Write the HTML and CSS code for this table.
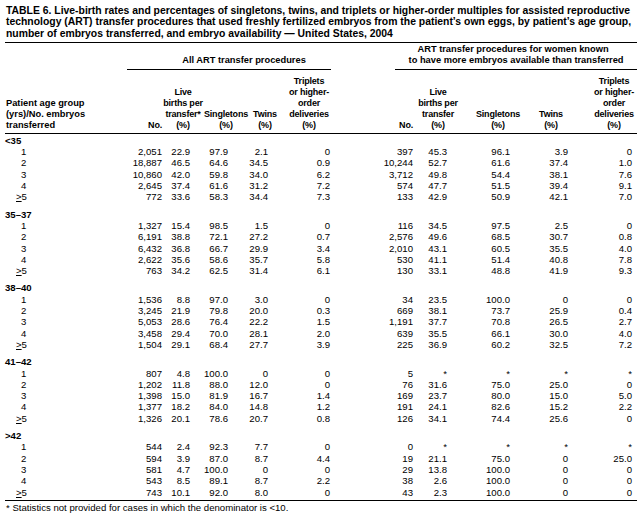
FILE: index.html
```html
<!DOCTYPE html>
<html lang="en">
<head>
<meta charset="utf-8">
<title>Table 6</title>
<link rel="stylesheet" href="styles.css">
</head>
<body>
<div class="page">
  <h1 class="title">TABLE 6. Live-birth rates and percentages of singletons, twins, and triplets or higher-order multiples for assisted reproductive technology (ART) transfer procedures that used freshly fertilized embryos from the patient’s own eggs, by patient’s age group, number of embryos transferred, and embryo availability — United States, 2004</h1>
  <table class="tbl">
    <colgroup>
      <col class="c-lab"><col class="c-nol"><col class="c-livel"><col class="c-singl"><col class="c-twl"><col class="c-trl"><col class="c-nor"><col class="c-liver"><col class="c-singr"><col class="c-twr"><col class="c-trr">
    </colgroup>
    <thead>
      <tr class="hrow1">
        <th colspan="6"></th>
        <th colspan="5" class="grp"><div class="grp-r">ART transfer procedures for women known</div></th>
      </tr>
      <tr class="hrow2">
        <th></th>
        <th colspan="5" class="grp"><div class="ul ul-l">All ART transfer procedures</div></th>
        <th colspan="5" class="grp"><div class="ul ul-r">to have more embryos available than transferred</div></th>
      </tr>
      <tr class="hrow3">
        <th class="lab">Patient age group<br>(yrs)/No. embryos<br>transferred</th>
        <th class="h nol">No.</th>
        <th class="h livel">Live<br>births per<br>transfer*<br>(%)</th>
        <th class="h singl">Singletons<br>(%)</th>
        <th class="h twl">Twins<br>(%)</th>
        <th class="h trl">Triplets<br>or higher-<br>order<br>deliveries<br>(%)</th>
        <th class="h nor">No.</th>
        <th class="h liver">Live<br>births per<br>transfer<br>(%)</th>
        <th class="h singr">Singletons<br>(%)</th>
        <th class="h twr">Twins<br>(%)</th>
        <th class="h trr">Triplets<br>or higher-<br>order<br>deliveries<br>(%)</th>
      </tr>
    </thead>
    <tbody>
      <tr class="grp-head first"><td colspan="11">&lt;35</td></tr>
      <tr><td class="n">1</td><td class="v nol">2,051</td><td class="v livel">22.9</td><td class="v singl">97.9</td><td class="v twl">2.1</td><td class="v trl">0</td><td class="v nor">397</td><td class="v liver">45.3</td><td class="v singr">96.1</td><td class="v twr">3.9</td><td class="v trr">0</td></tr>
      <tr><td class="n">2</td><td class="v nol">18,887</td><td class="v livel">46.5</td><td class="v singl">64.6</td><td class="v twl">34.5</td><td class="v trl">0.9</td><td class="v nor">10,244</td><td class="v liver">52.7</td><td class="v singr">61.6</td><td class="v twr">37.4</td><td class="v trr">1.0</td></tr>
      <tr><td class="n">3</td><td class="v nol">10,860</td><td class="v livel">42.0</td><td class="v singl">59.8</td><td class="v twl">34.0</td><td class="v trl">6.2</td><td class="v nor">3,712</td><td class="v liver">49.8</td><td class="v singr">54.4</td><td class="v twr">38.1</td><td class="v trr">7.6</td></tr>
      <tr><td class="n">4</td><td class="v nol">2,645</td><td class="v livel">37.4</td><td class="v singl">61.6</td><td class="v twl">31.2</td><td class="v trl">7.2</td><td class="v nor">574</td><td class="v liver">47.7</td><td class="v singr">51.5</td><td class="v twr">39.4</td><td class="v trr">9.1</td></tr>
      <tr><td class="n"><u>&gt;</u>5</td><td class="v nol">772</td><td class="v livel">33.6</td><td class="v singl">58.3</td><td class="v twl">34.4</td><td class="v trl">7.3</td><td class="v nor">133</td><td class="v liver">42.9</td><td class="v singr">50.9</td><td class="v twr">42.1</td><td class="v trr">7.0</td></tr>

      <tr class="grp-head"><td colspan="11">35–37</td></tr>
      <tr><td class="n">1</td><td class="v nol">1,327</td><td class="v livel">15.4</td><td class="v singl">98.5</td><td class="v twl">1.5</td><td class="v trl">0</td><td class="v nor">116</td><td class="v liver">34.5</td><td class="v singr">97.5</td><td class="v twr">2.5</td><td class="v trr">0</td></tr>
      <tr><td class="n">2</td><td class="v nol">6,191</td><td class="v livel">38.8</td><td class="v singl">72.1</td><td class="v twl">27.2</td><td class="v trl">0.7</td><td class="v nor">2,576</td><td class="v liver">49.6</td><td class="v singr">68.5</td><td class="v twr">30.7</td><td class="v trr">0.8</td></tr>
      <tr><td class="n">3</td><td class="v nol">6,432</td><td class="v livel">36.8</td><td class="v singl">66.7</td><td class="v twl">29.9</td><td class="v trl">3.4</td><td class="v nor">2,010</td><td class="v liver">43.1</td><td class="v singr">60.5</td><td class="v twr">35.5</td><td class="v trr">4.0</td></tr>
      <tr><td class="n">4</td><td class="v nol">2,622</td><td class="v livel">35.6</td><td class="v singl">58.6</td><td class="v twl">35.7</td><td class="v trl">5.8</td><td class="v nor">530</td><td class="v liver">41.1</td><td class="v singr">51.4</td><td class="v twr">40.8</td><td class="v trr">7.8</td></tr>
      <tr><td class="n"><u>&gt;</u>5</td><td class="v nol">763</td><td class="v livel">34.2</td><td class="v singl">62.5</td><td class="v twl">31.4</td><td class="v trl">6.1</td><td class="v nor">130</td><td class="v liver">33.1</td><td class="v singr">48.8</td><td class="v twr">41.9</td><td class="v trr">9.3</td></tr>

      <tr class="grp-head"><td colspan="11">38–40</td></tr>
      <tr><td class="n">1</td><td class="v nol">1,536</td><td class="v livel">8.8</td><td class="v singl">97.0</td><td class="v twl">3.0</td><td class="v trl">0</td><td class="v nor">34</td><td class="v liver">23.5</td><td class="v singr">100.0</td><td class="v twr">0</td><td class="v trr">0</td></tr>
      <tr><td class="n">2</td><td class="v nol">3,245</td><td class="v livel">21.9</td><td class="v singl">79.8</td><td class="v twl">20.0</td><td class="v trl">0.3</td><td class="v nor">669</td><td class="v liver">38.1</td><td class="v singr">73.7</td><td class="v twr">25.9</td><td class="v trr">0.4</td></tr>
      <tr><td class="n">3</td><td class="v nol">5,053</td><td class="v livel">28.6</td><td class="v singl">76.4</td><td class="v twl">22.2</td><td class="v trl">1.5</td><td class="v nor">1,191</td><td class="v liver">37.7</td><td class="v singr">70.8</td><td class="v twr">26.5</td><td class="v trr">2.7</td></tr>
      <tr><td class="n">4</td><td class="v nol">3,458</td><td class="v livel">29.4</td><td class="v singl">70.0</td><td class="v twl">28.1</td><td class="v trl">2.0</td><td class="v nor">639</td><td class="v liver">35.5</td><td class="v singr">66.1</td><td class="v twr">30.0</td><td class="v trr">4.0</td></tr>
      <tr><td class="n"><u>&gt;</u>5</td><td class="v nol">1,504</td><td class="v livel">29.1</td><td class="v singl">68.4</td><td class="v twl">27.7</td><td class="v trl">3.9</td><td class="v nor">225</td><td class="v liver">36.9</td><td class="v singr">60.2</td><td class="v twr">32.5</td><td class="v trr">7.2</td></tr>

      <tr class="grp-head"><td colspan="11">41–42</td></tr>
      <tr><td class="n">1</td><td class="v nol">807</td><td class="v livel">4.8</td><td class="v singl">100.0</td><td class="v twl">0</td><td class="v trl">0</td><td class="v nor">5</td><td class="v liver">*</td><td class="v singr">*</td><td class="v twr">*</td><td class="v trr">*</td></tr>
      <tr><td class="n">2</td><td class="v nol">1,202</td><td class="v livel">11.8</td><td class="v singl">88.0</td><td class="v twl">12.0</td><td class="v trl">0</td><td class="v nor">76</td><td class="v liver">31.6</td><td class="v singr">75.0</td><td class="v twr">25.0</td><td class="v trr">0</td></tr>
      <tr><td class="n">3</td><td class="v nol">1,398</td><td class="v livel">15.0</td><td class="v singl">81.9</td><td class="v twl">16.7</td><td class="v trl">1.4</td><td class="v nor">169</td><td class="v liver">23.7</td><td class="v singr">80.0</td><td class="v twr">15.0</td><td class="v trr">5.0</td></tr>
      <tr><td class="n">4</td><td class="v nol">1,377</td><td class="v livel">18.2</td><td class="v singl">84.0</td><td class="v twl">14.8</td><td class="v trl">1.2</td><td class="v nor">191</td><td class="v liver">24.1</td><td class="v singr">82.6</td><td class="v twr">15.2</td><td class="v trr">2.2</td></tr>
      <tr><td class="n"><u>&gt;</u>5</td><td class="v nol">1,326</td><td class="v livel">20.1</td><td class="v singl">78.6</td><td class="v twl">20.7</td><td class="v trl">0.8</td><td class="v nor">126</td><td class="v liver">34.1</td><td class="v singr">74.4</td><td class="v twr">25.6</td><td class="v trr">0</td></tr>

      <tr class="grp-head"><td colspan="11">&gt;42</td></tr>
      <tr><td class="n">1</td><td class="v nol">544</td><td class="v livel">2.4</td><td class="v singl">92.3</td><td class="v twl">7.7</td><td class="v trl">0</td><td class="v nor">0</td><td class="v liver">*</td><td class="v singr">*</td><td class="v twr">*</td><td class="v trr">*</td></tr>
      <tr><td class="n">2</td><td class="v nol">594</td><td class="v livel">3.9</td><td class="v singl">87.0</td><td class="v twl">8.7</td><td class="v trl">4.4</td><td class="v nor">19</td><td class="v liver">21.1</td><td class="v singr">75.0</td><td class="v twr">0</td><td class="v trr">25.0</td></tr>
      <tr><td class="n">3</td><td class="v nol">581</td><td class="v livel">4.7</td><td class="v singl">100.0</td><td class="v twl">0</td><td class="v trl">0</td><td class="v nor">29</td><td class="v liver">13.8</td><td class="v singr">100.0</td><td class="v twr">0</td><td class="v trr">0</td></tr>
      <tr><td class="n">4</td><td class="v nol">543</td><td class="v livel">8.5</td><td class="v singl">89.1</td><td class="v twl">8.7</td><td class="v trl">2.2</td><td class="v nor">38</td><td class="v liver">2.6</td><td class="v singr">100.0</td><td class="v twr">0</td><td class="v trr">0</td></tr>
      <tr class="last"><td class="n"><u>&gt;</u>5</td><td class="v nol">743</td><td class="v livel">10.1</td><td class="v singl">92.0</td><td class="v twl">8.0</td><td class="v trl">0</td><td class="v nor">43</td><td class="v liver">2.3</td><td class="v singr">100.0</td><td class="v twr">0</td><td class="v trr">0</td></tr>
    </tbody>
  </table>
  <p class="foot">* Statistics not provided for cases in which the denominator is &lt;10.</p>
</div>
</body>
</html>
```

FILE: styles.css
```css
html, body {
  margin: 0;
  padding: 0;
  background: #ffffff;
}

body {
  font-family: "Liberation Sans", Arial, Helvetica, sans-serif;
  color: #000000;
  font-size: 9.6px;
}

.page {
  width: 632px;
  padding: 4px 3px 0 5px;
}

.title {
  margin: 0;
  padding: 1px 0 3px 1px;
  font-size: 10.4px;
  line-height: 11.3px;
  font-weight: bold;
  border-bottom: 1px solid #000;
}

.tbl {
  width: 632px;
  table-layout: fixed;
  border-collapse: collapse;
  border-spacing: 0;
  line-height: 11.3px;
}

.c-lab { width: 122px; }
.c-nol { width: 35px; }
.c-livel { width: 42px; }
.c-singl { width: 44px; }
.c-twl { width: 34px; }
.c-trl { width: 49px; }
.c-nor { width: 82px; }
.c-liver { width: 50px; }
.c-singr { width: 70px; }
.c-twr { width: 36px; }
.c-trr { width: 68px; }

.tbl th, .tbl td {
  padding: 0;
  white-space: nowrap;
  overflow: visible;
  vertical-align: bottom;
}

.tbl th {
  font-weight: bold;
  font-size: 9.3px;
  line-height: 11px;
}

.tbl th.h {
  font-size: 9px;
  letter-spacing: -0.2px;
}

.hrow1 th {
  padding-top: 1px;
  height: 11px;
}

.grp {
  text-align: center;
}

.grp-r {
  margin-left: 64px;
  padding-right: 6px;
}

.ul {
  padding-bottom: 3px;
  border-bottom: 1px solid #000;
}

.ul-l {
  padding-left: 30px;
}

.ul-r {
  margin-left: 64px;
}

.hrow3 th {
  padding-top: 6px;
  padding-bottom: 2px;
  border-bottom: 1px solid #000;
  text-align: center;
}

.hrow3 th.lab {
  text-align: left;
  padding-left: 1px;
}

.hrow3 th.nol, .hrow3 th.nor {
  text-align: right;
}

.hrow3 th.trl { padding-left: 5px; }
.hrow3 th.trr { padding-left: 22px; }

.grp-head td {
  padding-top: 6px;
  font-weight: bold;
}

.grp-head.first td {
  padding-top: 1px;
}

.tbl td.v {
  text-align: right;
}

.tbl td.n {
  text-align: left;
  padding-left: 16px;
}

.tbl td.n u {
  margin-left: -5px;
}

td.nol { padding-right: 0; }
td.livel { padding-right: 14px; }
td.singl { padding-right: 20px; }
td.twl { padding-right: 14px; }
td.trl { padding-right: 1px; }
td.nor { padding-right: 0; }
td.liver { padding-right: 16px; }
td.singr { padding-right: 23px; }
td.twr { padding-right: 1px; }
td.trr { padding-right: 5px; }

.tbl tr.last td {
  padding-bottom: 2px;
  border-bottom: 1px solid #000;
}

.foot {
  margin: 0;
  padding: 1px 0 0 1px;
  font-size: 9.6px;
  line-height: 11px;
}
```
